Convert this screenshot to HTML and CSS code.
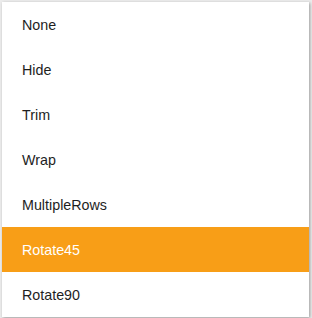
FILE: index.html
```html
<!DOCTYPE html>
<html>
<head>
<meta charset="utf-8">
<link rel="stylesheet" href="styles.css">
</head>
<body>
<ul class="menu">
  <li class="item">None</li>
  <li class="item">Hide</li>
  <li class="item">Trim</li>
  <li class="item">Wrap</li>
  <li class="item">MultipleRows</li>
  <li class="item selected">Rotate45</li>
  <li class="item">Rotate90</li>
</ul>
</body>
</html>
```

FILE: styles.css
```css
html, body {
  margin: 0;
  padding: 0;
  background: #ececec;
  width: 312px;
  height: 318px;
  overflow: hidden;
}
.menu {
  list-style: none;
  margin: 2px 0 0 2px;
  padding: 0;
  width: 307px;
  background: #fff;
  box-shadow: 1px 1px 3px rgba(0,0,0,0.35);
  font-family: "Liberation Sans", Arial, sans-serif;
  font-size: 14.3px;
  color: #1e1e1e;
}
.item {
  box-sizing: border-box;
  height: 45px;
  line-height: 45px;
  padding: 1px 0 0 20px;
}
.item.selected {
  background: #f89e17;
  color: #fff;
}
```
